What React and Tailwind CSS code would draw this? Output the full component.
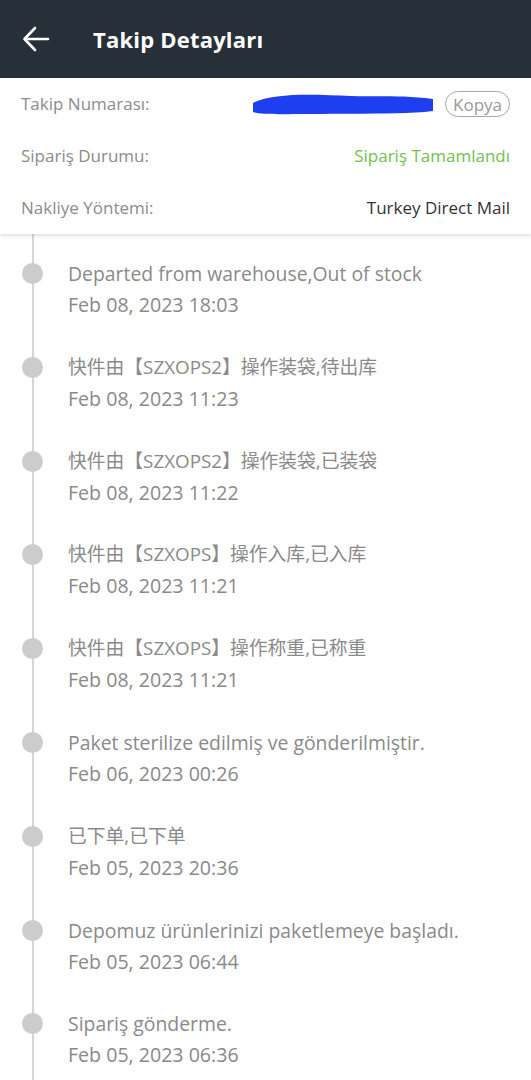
import { useState } from 'react'

const events = [
  { title: 'Departed from warehouse,Out of stock', date: 'Feb 08, 2023 18:03' },
  { title: '快件由【SZXOPS2】操作装袋,待出库', date: 'Feb 08, 2023 11:23', cjk: true },
  { title: '快件由【SZXOPS2】操作装袋,已装袋', date: 'Feb 08, 2023 11:22', cjk: true },
  { title: '快件由【SZXOPS】操作入库,已入库', date: 'Feb 08, 2023 11:21', cjk: true },
  { title: '快件由【SZXOPS】操作称重,已称重', date: 'Feb 08, 2023 11:21', cjk: true },
  { title: 'Paket sterilize edilmiş ve gönderilmiştir.', date: 'Feb 06, 2023 00:26' },
  { title: '已下单,已下单', date: 'Feb 05, 2023 20:36', cjk: true },
  { title: 'Depomuz ürünlerinizi paketlemeye başladı.', date: 'Feb 05, 2023 06:44' },
  { title: 'Sipariş gönderme.', date: 'Feb 05, 2023 06:36' },
]

export default function App() {
  const [copied, setCopied] = useState(false)

  return (
    <div
      className="w-[531px] h-[1080px] overflow-hidden bg-white"
      style={{ fontFamily: '"Open Sans", "Noto Sans CJK SC", sans-serif' }}
    >
      {/* Header */}
      <div className="h-[78px] bg-[#273038] flex items-center">
        <button className="ml-[21px] w-[30px] h-[30px] flex items-center justify-center text-white" aria-label="Back">
          <BackIcon />
        </button>
        <h1 className="ml-[42px] text-white text-[22px] font-bold tracking-[0.2px]">Takip Detayları</h1>
      </div>

      {/* Info card */}
      <div className="relative z-10 bg-white px-[21px] shadow-[0_2px_4px_rgba(0,0,0,0.12)]">
        <div className="h-[52px] flex items-center justify-between">
          <span className="text-[17px] text-[#8c8c8c]">Takip Numarası:</span>
          <div className="flex items-center gap-[10px]">
            <Scribble />
            <button
              onClick={() => setCopied(true)}
              className="h-[26px] px-[7px] rounded-full border border-[#a9a9a9] text-[17px] leading-none text-[#9a9a9a]"
            >
              {copied ? 'Kopya' : 'Kopya'}
            </button>
          </div>
        </div>
        <div className="h-[52px] flex items-center justify-between">
          <span className="text-[17px] text-[#8c8c8c]">Sipariş Durumu:</span>
          <span className="text-[17px] text-[#6fc34c]">Sipariş Tamamlandı</span>
        </div>
        <div className="h-[52px] flex items-center justify-between">
          <span className="text-[17px] text-[#8c8c8c]">Nakliye Yöntemi:</span>
          <span className="text-[17px] text-[#333333]">Turkey Direct Mail</span>
        </div>
      </div>

      {/* Timeline */}
      <div className="relative pt-[24px]">
        <div className="absolute left-[32px] top-0 bottom-0 w-[2px] bg-[#d6d6d6]" />
        {events.map((ev, i) => (
          <div key={i} className="relative flex h-[93.8px]">
            <div className="w-[68px] shrink-0 flex justify-center pr-[2px] pt-[5px]">
              <div className="w-[21px] h-[21px] rounded-full bg-[#cccccc] ml-[-2px]" />
            </div>
            <div className="flex flex-col">
              <span
                className={
                  ev.cjk
                    ? 'text-[18.8px] leading-[31px] text-[#8a8a8a] whitespace-nowrap'
                    : 'text-[19.4px] leading-[31px] text-[#8a8a8a] whitespace-nowrap'
                }
              >
                {ev.title}
              </span>
              <span className="text-[19.6px] leading-[31px] text-[#8a8a8a]">{ev.date}</span>
            </div>
          </div>
        ))}
      </div>
    </div>
  )
}

function BackIcon() {
  return (
    <svg width="28" height="26" viewBox="0 0 28 26" fill="none" stroke="currentColor" strokeWidth="2.6" strokeLinecap="round" strokeLinejoin="round">
      <line x1="3" y1="13" x2="26" y2="13" />
      <polyline points="13,2 2.5,13 13,24" />
    </svg>
  )
}

function Scribble() {
  return (
    <svg width="184" height="26" viewBox="0 0 184 26">
      <path d="M2 12 C20 2 60 3 100 5 C130 6 150 4 182 8 L182 20 C150 24 100 22 60 23 C30 23 10 24 2 21 Z" fill="#1d3ff0" />
    </svg>
  )
}
